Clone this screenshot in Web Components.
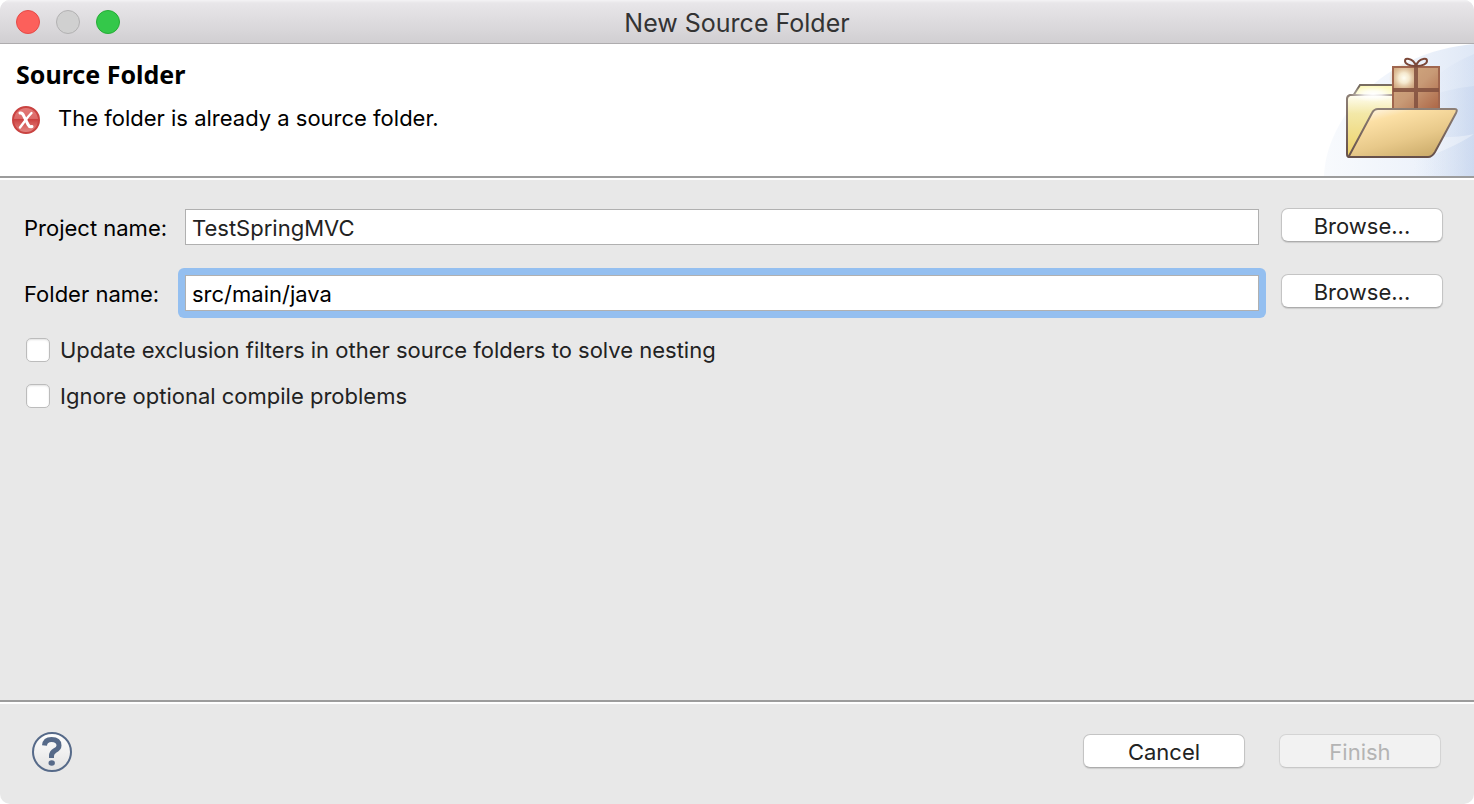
<!DOCTYPE html>
<html lang="en">
<head>
<meta charset="utf-8">
<title>New Source Folder</title>
<style>
  html { background: #fff; }
  body { margin: 0; font-family: Inter, "Liberation Sans", sans-serif; font-size: 22px; line-height: 28px; color: #000; }
</style>
</head>
<body>
<wizard-window>
  <title-bar slot="title">New Source Folder</title-bar>
  <wizard-header slot="header">
    <span slot="heading">Source Folder</span>
    <span slot="message">The folder is already a source folder.</span>
  </wizard-header>
  <wizard-field slot="fields" label="Project name:" value="TestSpringMVC"></wizard-field>
  <wizard-field slot="fields" label="Folder name:" value="src/main/java" active></wizard-field>
  <wizard-check>Update exclusion filters in other source folders to solve nesting</wizard-check>
  <wizard-check>Ignore optional compile problems</wizard-check>
  <wizard-footer slot="footer">
    <push-button>Cancel</push-button>
    <push-button disabled>Finish</push-button>
  </wizard-footer>
</wizard-window>

<script>
const define = (name, html, setup) => {
  const template = document.createElement('template');
  template.innerHTML = '<style>*{box-sizing:border-box}</style>' + html;
  customElements.define(name, class extends HTMLElement {
    constructor() {
      super();
      this.attachShadow({ mode: 'open' }).append(template.content.cloneNode(true));
    }
    connectedCallback() { if (setup) setup(this, this.shadowRoot); }
  });
};

const buttonCss = `
  button { font: inherit; line-height: 28px; width: 162px; height: 34px; padding: 2px 0 0; color: #222;
    background: #fff; border: 1px solid #c4c4c4; border-bottom-color: #acacac; border-radius: 7px;
    box-shadow: 0 1px 1px rgba(0,0,0,.12); }
  button:disabled { color: #b4b4b4; background: #f2f2f2; border-color: #d4d4d4; border-bottom-color: #c8c8c8; box-shadow: 0 1px 1px rgba(0,0,0,.04); }`;

define('wizard-window', `
  <style>
    :host { display: flex; flex-direction: column; min-height: 100vh; background: #e8e8e8; border-radius: 10px; overflow: hidden; box-sizing: border-box; }
    main { flex: 1; display: flex; flex-direction: column; gap: 25px; padding: 30px 31px 28px 24px; }
    .fields { display: flex; flex-direction: column; gap: 29px; }
    .checks { display: flex; flex-direction: column; gap: 18px; }
  </style>
  <slot name="title"></slot>
  <slot name="header"></slot>
  <main>
    <div class="fields"><slot name="fields"></slot></div>
    <div class="checks"><slot></slot></div>
  </main>
  <slot name="footer"></slot>`);

define('title-bar', `
  <style>
    :host { display: grid; grid-template-columns: 1fr auto 1fr; align-items: center; height: 44px; padding: 0 16px;
      background: linear-gradient(#f4f3f5 0, #e8e6e9 3px, #d1cfd2 100%); border-bottom: 1px solid #aeacae; box-sizing: border-box; }
    .lights { display: flex; gap: 16px; }
    button { width: 24px; height: 24px; padding: 0; border-radius: 50%; border: 1px solid; }
    .close { background: #fc605b; border-color: #e54a47; }
    .min { background: #d0d0d0; border-color: #b2b1b2; }
    .zoom { background: #34c84a; border-color: #26ac36; }
    h1 { margin: 0; padding-top: 2px; font-size: 25px; font-weight: 400; line-height: 32px; color: #333; }
  </style>
  <div class="lights">
    <button class="close" aria-label="Close"></button>
    <button class="min" aria-label="Minimize" disabled></button>
    <button class="zoom" aria-label="Zoom"></button>
  </div>
  <h1><slot></slot></h1>`);

define('wizard-header', `
  <style>
    :host { display: flex; justify-content: space-between; background: #fff; border-bottom: 2px solid #9c9c9c; box-shadow: 0 2px #fff; position: relative; }
    .text { padding: 16px 0 0 12px; }
    h2 { margin: 0 4px; font: 700 25px/28px "Noto Sans", "Open Sans", sans-serif; }
    p { margin: 16px 0 0; display: flex; align-items: flex-start; gap: 18px; }
    svg { display: block; flex: none; }
  </style>
  <div class="text">
    <h2><slot name="heading"></slot></h2>
    <p>
      <svg width="28" height="32" viewBox="0 -2 28 32" aria-hidden="true">
        <defs><linearGradient id="r" x2="0" y2="1"><stop stop-color="#e37b78"/><stop offset=".44" stop-color="#dc6a68"/><stop offset=".48" stop-color="#cb4140"/><stop offset=".58" stop-color="#d25250"/><stop offset="1" stop-color="#e58b87"/></linearGradient></defs>
        <circle cx="14" cy="14" r="13" fill="url(#r)" stroke="#c94341" stroke-width="2"/>
        <path d="M8 7Q10.500 6.500 11.500 9.500L16 18.500Q17.500 21.500 20 20.500" fill="none" stroke="#fff" stroke-width="3" stroke-linecap="round"/>
        <path d="M19.500 7Q17 9.500 14 13.500L8 21.500" fill="none" stroke="#fff" stroke-width="2.400" stroke-linecap="round"/>
      </svg>
      <slot name="message"></slot>
    </p>
  </div>
  <svg width="150" height="132" viewBox="0 0 150 132" aria-hidden="true">
    <defs>
      <linearGradient id="bg"><stop stop-color="#f8fafd"/><stop offset=".6" stop-color="#eef3fb"/><stop offset="1" stop-color="#dfe8f6"/></linearGradient>
      <linearGradient id="bg2"><stop stop-color="#dfe8f6" stop-opacity="0"/><stop offset="1" stop-color="#c6d5ee"/></linearGradient>
      <linearGradient id="back" x2="0" y2="1"><stop stop-color="#fffef2"/><stop offset=".3" stop-color="#f3e8a8"/><stop offset="1" stop-color="#edd065"/></linearGradient>
      <linearGradient id="front" x1=".2" x2=".8" y2="1"><stop stop-color="#fff6e6"/><stop offset=".2" stop-color="#fce0a5"/><stop offset=".6" stop-color="#e8c98a"/><stop offset="1" stop-color="#c9a968"/></linearGradient>
      <linearGradient id="line" x2="0" y2="1"><stop stop-color="#8d7f76"/><stop offset="1" stop-color="#66504a"/></linearGradient>
      <linearGradient id="box" x2="1" y2="1"><stop stop-color="#d4ac82"/><stop offset=".5" stop-color="#c89a76"/><stop offset="1" stop-color="#ab6444"/></linearGradient>
      <radialGradient id="shine"><stop stop-color="#fffdf2"/><stop offset=".35" stop-color="#f7ecd2" stop-opacity=".95"/><stop offset="1" stop-color="#e1bf94" stop-opacity="0"/></radialGradient>
      <radialGradient id="glow"><stop stop-color="#fff"/><stop offset=".4" stop-color="#fff" stop-opacity=".8"/><stop offset="1" stop-color="#fff" stop-opacity="0"/></radialGradient>
    </defs>
    <path d="M0 132C2 75 58 8 150 0V132Z" fill="url(#bg)"/>
    <path d="M112 32Q130 18 150 10V132H100Z" fill="url(#bg2)" opacity=".35"/>
    <path d="M90 60Q120 44 150 42V132H90Z" fill="url(#bg2)" opacity=".6"/>
    <path d="M108 93Q132 94 150 90Q136 100 106 112Z" fill="#fff" opacity=".35"/>
    <path d="M29 52L36 41H71V54H29Z" fill="#fcf8bd" stroke="#786c60" stroke-width="2"/>
    <path d="M26 51H72V113H25Q23 113 23 110V55Q23 52 26 51Z" fill="url(#back)" stroke="url(#line)" stroke-width="2"/>
    <ellipse cx="49" cy="50" rx="23" ry="8" fill="url(#glow)"/>
    <path d="M69 23H115V66H69Z" fill="url(#box)"/>
    <circle cx="80" cy="34" r="15" fill="url(#shine)"/>
    <path d="M69 23H115V66H69Z" fill="none" stroke="#a0664e" stroke-width="2"/>
    <path d="M92 23V66M69 46H115" stroke="#82503f" stroke-width="4" opacity=".85"/>
    <path d="M91 22C86 22 81 20 81 17Q81 14 85 15Q90 16 92 22ZM93 22C98 22 103 20 103 17Q103 14 99 15Q94 16 92 22Z" fill="none" stroke="#7b4839" stroke-width="2"/>
    <path d="M25 112L48 69Q50 65 54 65H131Q134 65 132 69L111 108Q108 113 104 113H27Q24 113 25 112Z" fill="url(#front)" stroke="url(#line)" stroke-width="2"/>
  </svg>`);

define('wizard-field', `
  <style>
    :host { display: grid; grid-template-columns: 161px minmax(0, 1fr) 162px; align-items: start; }
    label { padding-top: 6px; white-space: nowrap; line-height: 28px; }
    .ring { display: flex; margin: -6px 15px -7px -7px; padding: 7px; border-radius: 6px; }
    input { flex: 1; font: inherit; min-width: 0; height: 36px; margin: 0; padding: 2px 6px 0; color: #222;
      background: #fff; border: 1px solid #b0b0b0; border-radius: 0; outline: none; }
    :host([active]) .ring { background: #94bff0; }
    :host([active]) input { color: #000; }
    ${buttonCss}
  </style>
  <label for="value"></label>
  <div class="ring"><input id="value" type="text" spellcheck="false"></div>
  <button type="button">Browse...</button>`,
  (host, root) => {
    root.querySelector('label').textContent = host.getAttribute('label');
    root.querySelector('input').value = host.getAttribute('value');
  });

define('wizard-check', `
  <style>
    :host { display: block; }
    label { display: flex; align-items: center; gap: 10px; padding-left: 2px; color: #222; }
    input { appearance: none; flex: none; width: 24px; height: 24px; margin: 0; background: #fff;
      border: 1px solid #bcbcbc; border-radius: 5px; box-shadow: inset 0 1px 2px rgba(0,0,0,.12); }
    input:checked { background: #3b8df5; }
  </style>
  <label><input type="checkbox"><slot></slot></label>`);

define('push-button', `
  <style>:host { display: block; } ${buttonCss}</style>
  <button type="button"><slot></slot></button>`,
  (host, root) => { root.querySelector('button').disabled = host.hasAttribute('disabled'); });

define('wizard-footer', `
  <style>
    :host { display: flex; align-items: flex-start; justify-content: space-between; border-top: 2px solid #9c9c9c;
      padding: 30px 33px 32px 32px; box-shadow: inset 0 2px #fff; }
    .help { width: 40px; height: 40px; padding: 0; border: 0; background: none; }
    svg { display: block; }
    .actions { display: flex; gap: 34px; padding-top: 2px; }
  </style>
  <button class="help" type="button" aria-label="Help">
    <svg width="40" height="40" viewBox="0 0 40 40">
      <defs><linearGradient id="h" x2="0" y2="1"><stop stop-color="#fff"/><stop offset="1" stop-color="#e2e2e2"/></linearGradient></defs>
      <circle cx="20" cy="20" r="19" fill="url(#h)" stroke="#566a89" stroke-width="2"/>
      <path d="M12.500 13.500Q13 7.500 19.500 7.500Q27 7.500 27 13.500Q27 16.500 23 18.500Q19.500 20.500 19.500 24V26" fill="none" stroke="#566a89" stroke-width="5"/>
      <ellipse cx="19.700" cy="31" rx="3.200" ry="2.800" fill="#566a89"/>
    </svg>
  </button>
  <div class="actions"><slot></slot></div>`);
</script>
</body>
</html>
